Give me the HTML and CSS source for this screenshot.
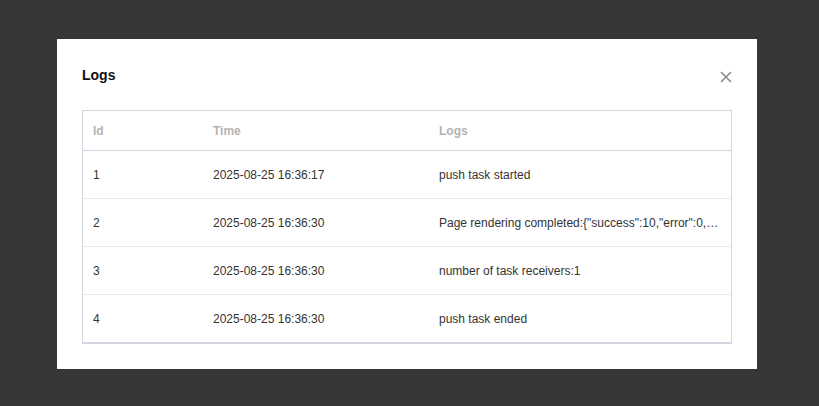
FILE: index.html
```html
<!DOCTYPE html>
<html>
<head>
<meta charset="utf-8">
<link rel="stylesheet" href="styles.css">
</head>
<body>
<div class="modal">
  <div class="modal-head">
    <h2 class="title">Logs</h2>
    <button class="close" aria-label="Close">
      <svg width="12" height="12" viewBox="0 0 12 12"><path d="M1 1L11 11M11 1L1 11" stroke="#8c8c8c" stroke-width="1.6" fill="none"/></svg>
    </button>
  </div>
  <div class="table-wrap">
    <table class="logs">
      <colgroup><col class="c-id"><col class="c-time"><col></colgroup>
      <thead>
        <tr><th>Id</th><th>Time</th><th>Logs</th></tr>
      </thead>
      <tbody>
        <tr><td>1</td><td>2025-08-25 16:36:17</td><td>push task started</td></tr>
        <tr><td>2</td><td>2025-08-25 16:36:30</td><td>Page rendering completed:{"success":10,"error":0,"total":10}</td></tr>
        <tr><td>3</td><td>2025-08-25 16:36:30</td><td>number of task receivers:1</td></tr>
        <tr><td>4</td><td>2025-08-25 16:36:30</td><td>push task ended</td></tr>
      </tbody>
    </table>
  </div>
</div>
</body>
</html>
```
FILE: styles.css
```css
html, body {
  margin: 0;
  padding: 0;
  background: #373737;
  height: 100%;
}
body {
  font-family: "Liberation Sans", Arial, sans-serif;
  padding: 39px 0 0 57px;
  box-sizing: border-box;
}
.modal {
  width: 700px;
  background: #fff;
  padding: 25px 25px 25px 25px;
  box-sizing: border-box;
}
.modal-head {
  display: flex;
  align-items: center;
  justify-content: space-between;
  height: 22px;
  margin-bottom: 24px;
}
.title {
  margin: 0;
  font-size: 14px;
  font-weight: 700;
  color: #111;
  line-height: 22px;
}
.close {
  border: 0;
  background: none;
  padding: 0;
  margin: 4px 0 0 0;
  width: 12px;
  height: 12px;
  display: flex;
}
.table-wrap {
  border: 1px solid #d3d6df;
  border-bottom: 2px solid #d3d6df;
}
.logs {
  width: 100%;
  border-collapse: collapse;
  table-layout: fixed;
  font-size: 12px;
}
.c-id { width: 120px; }
.c-time { width: 226px; }
.logs th {
  text-align: left;
  font-weight: 700;
  color: #b3b3b3;
  height: 39px;
  padding: 0 10px;
  border-bottom: 1px solid #d3d6df;
}
.logs td {
  color: #333;
  height: 47px;
  padding: 0 10px;
  border-top: 1px solid #e7e9ee;
  white-space: nowrap;
  overflow: hidden;
  text-overflow: ellipsis;
}
.logs tbody tr:first-child td { border-top: 0; }
```
